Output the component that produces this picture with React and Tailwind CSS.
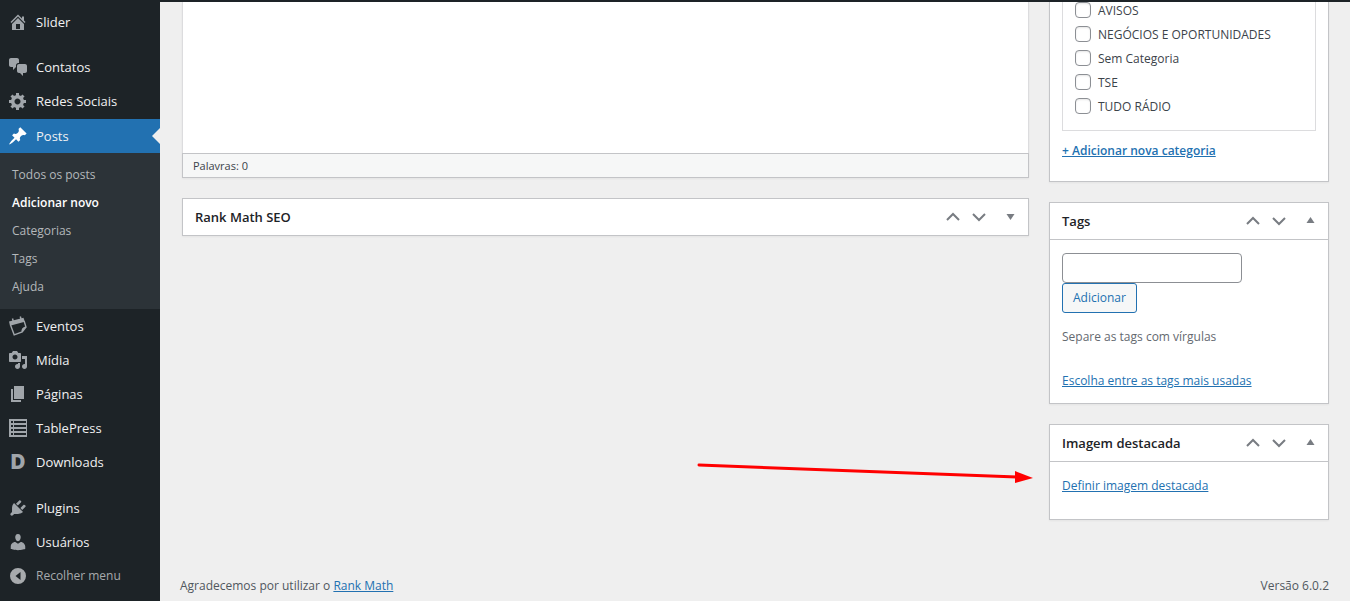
import React, { useState } from 'react';

const ICONS = {
  home: 'M16 8.5l1.53 1.53-1.06 1.06L10 4.6l-6.47 6.49-1.06-1.06L10 2.5l4 4v-2h2v4zm-6-2.46l6 5.99V18H4v-5.97zM12 17v-5H8v5h4z',
  chat: 'M11 6h-.82C9.07 6 8 7.2 8 8.16V10l-3 3v-3H3c-1.1 0-2-.9-2-2V3c0-1.1.9-2 2-2h6c1.1 0 2 .9 2 2v3zm0 1h6c1.1 0 2 .9 2 2v5c0 1.1-.9 2-2 2h-2v3l-3-3h-1c-1.1 0-2-.9-2-2V9c0-1.1.9-2 2-2z',
  gear: 'M18 12h-2.18c-.17.7-.44 1.35-.81 1.93l1.54 1.54-2.1 2.1-1.54-1.54c-.58.36-1.23.63-1.91.79V19H8v-2.18c-.68-.16-1.33-.43-1.91-.79l-1.54 1.54-2.12-2.12 1.54-1.54c-.36-.58-.63-1.23-.79-1.91H1V9.03h2.17c.16-.7.44-1.35.8-1.94L2.43 5.55l2.1-2.1 1.54 1.54c.58-.37 1.24-.64 1.93-.81V2h3v2.18c.68.16 1.33.43 1.91.79l1.54-1.54 2.12 2.12-1.54 1.54c.36.59.64 1.24.8 1.94H18V12zm-8.5 1.5c1.66 0 3-1.34 3-3s-1.34-3-3-3-3 1.34-3 3 1.34 3 3 3z',
  pin: 'M10.44 3.02l1.82-1.82 6.36 6.35-1.83 1.82c-1.05-.68-2.48-.57-3.41.36l-.75.75c-.92.93-1.04 2.35-.35 3.41l-1.83 1.82-2.41-2.41-2.8 2.79c-.42.42-3.38 2.71-3.8 2.29s1.86-3.39 2.28-3.81l2.79-2.79L4.1 9.36l1.83-1.82c1.05.69 2.48.57 3.4-.36l.75-.75c.93-.92 1.05-2.35.36-3.41z',
  media: 'M13 11V4c0-.55-.45-1-1-1h-1.67L9 1H5L3.67 3H2c-.55 0-1 .45-1 1v7c0 .55.45 1 1 1h10c.55 0 1-.45 1-1zM7 4.5c1.38 0 2.5 1.12 2.5 2.5S8.38 9.5 7 9.5 4.5 8.38 4.5 7 5.62 4.5 7 4.5zM14 6h5v10.5c0 1.38-1.12 2.5-2.5 2.5S14 17.88 14 16.5s1.12-2.5 2.5-2.5c.17 0 .34.02.5.05V9h-3V6zm-4 8.05V13h2v3.5c0 1.38-1.12 2.5-2.5 2.5S7 17.88 7 16.5 8.12 14 9.5 14c.17 0 .34.02.5.05z',
  pages: 'M6 15V2h10v13H6zm-1 1h8v2H3V5h2v11z',
  table: 'M1 1h18v18H1zM3 3v2h2V3zM6 3v2h12V3zM3 7v2h2V7zM6 7v2h12V7zM3 11v2h2v-2zM6 11v2h12v-2zM3 15v2h2v-2zM6 15v2h12v-2z',
  plug: 'M13.11 4.36L9.87 7.6 8 5.73l3.24-3.24c.35-.34 1.05-.2 1.56.32.52.51.66 1.21.31 1.55zm-8 1.77l.91-1.12 9.01 9.01-1.19.84c-.71.71-2.63 1.16-3.82 1.16H6.14L4.9 17.26c-.59.59-1.54.59-2.12 0-.59-.58-.59-1.53 0-2.12l1.24-1.24v-3.88c0-1.13.4-3.19 1.09-3.89zm7.26 3.97l3.24-3.24c.34-.35 1.04-.21 1.55.31.52.51.66 1.21.31 1.55l-3.24 3.25z',
  user: 'M10 9.25c-2.27 0-2.73-3.44-2.73-3.44C7 4.02 7.82 2 9.97 2c2.16 0 2.98 2.02 2.71 3.81 0 0-.41 3.44-2.68 3.44zm0 2.57L12.72 10c2.39 0 4.52 2.33 4.52 4.53v2.49s-3.65 1.13-7.24 1.13c-3.65 0-7.24-1.13-7.24-1.13v-2.49c0-2.25 1.94-4.48 4.47-4.48z',
  collapse: 'M10 2a8 8 0 1 0 0 16 8 8 0 0 0 0-16zM12.500 6v8l-5-4z',
};

const SUBMENU = ['Todos os posts', 'Adicionar novo', 'Categorias', 'Tags', 'Ajuda'];
const CATEGORIES = ['AVISOS', 'NEGÓCIOS E OPORTUNIDADES', 'Sem Categoria', 'TSE', 'TUDO RÁDIO'];

function Icon({ name }) {
  if (name === 'letter') {
    return <span className="w-5 text-center font-['Inter',sans-serif] text-xl leading-5 font-black">D</span>;
  }
  if (name === 'calendar') {
    return (
      <svg viewBox="0 0 20 20" className="size-5 shrink-0" fill="none" stroke="currentColor" aria-hidden="true">
        <path d="M1 5.500L15.500 1.800l1.300 4L2 9.800z" fill="currentColor" stroke="none" />
        <path d="M4.500 2.500l.8 3M12.300.5l.8 3" strokeWidth="1.500" />
        <path d="M2.500 9l3.700 9.800 8-2.800 3.800-5-1.900-6M14.200 16c-.5-2.600.8-4 3.800-5" strokeWidth="1.400" />
      </svg>
    );
  }
  return (
    <svg viewBox="0 0 20 20" className="size-5 shrink-0" fill="currentColor" fillRule="evenodd" aria-hidden="true">
      <path d={ICONS[name]} />
    </svg>
  );
}

function MenuItem({ icon, label, current }) {
  return (
    <li className={current ? 'relative bg-[#2271b1]' : ''}>
      <a href="#" className="flex h-[34px] items-center gap-2 px-2 text-[13px] leading-5 text-[#f0f0f1]">
        <span className={current ? 'flex text-white' : 'flex text-[#a0a5aa]'}>
          <Icon name={icon} />
        </span>
        {label}
      </a>
      {current && (
        <span className="absolute top-1/2 right-0 -translate-y-1/2 border-8 border-l-0 border-transparent border-r-[#efefef]" />
      )}
    </li>
  );
}

function Sidebar() {
  return (
    <nav className="w-40 shrink-0 bg-[#1d2327] pt-[3px]">
      <ul>
        <MenuItem icon="home" label="Slider" />
        <li className="h-[11px]" />
        <MenuItem icon="chat" label="Contatos" />
        <MenuItem icon="gear" label="Redes Sociais" />
        <li className="h-px" />
        <MenuItem icon="pin" label="Posts" current />
        <li className="bg-[#2c3338] py-2">
          <ul>
            {SUBMENU.map((label) => (
              <li key={label}>
                <a
                  href="#"
                  className={`block px-3 text-xs leading-7 ${
                    label === 'Adicionar novo' ? 'font-semibold text-white' : 'text-[#b4b8bb]'
                  }`}
                >
                  {label}
                </a>
              </li>
            ))}
          </ul>
        </li>
        <MenuItem icon="calendar" label="Eventos" />
        <MenuItem icon="media" label="Mídia" />
        <MenuItem icon="pages" label="Páginas" />
        <MenuItem icon="table" label="TablePress" />
        <MenuItem icon="letter" label="Downloads" />
        <li className="h-3" />
        <MenuItem icon="plug" label="Plugins" />
        <MenuItem icon="user" label="Usuários" />
        <li>
          <button type="button" className="flex h-[34px] items-center gap-2 px-2 text-xs leading-5 text-[#a7aaad]">
            <Icon name="collapse" />
            Recolher menu
          </button>
        </li>
      </ul>
    </nav>
  );
}

function PanelHeader({ title, open, onToggle }) {
  return (
    <div className="flex h-9 items-center justify-between px-3">
      <h2 className="text-[13px] leading-5 font-semibold text-[#1d2327]">{title}</h2>
      <div className="flex items-center text-[#787c82]">
        <button type="button" aria-label="Mover para cima" className="mr-3">
          <svg viewBox="0 0 14 10" className="h-[10px] w-[14px]" fill="none" stroke="currentColor" strokeWidth="2">
            <path d="M1 8l6-6 6 6" />
          </svg>
        </button>
        <button type="button" aria-label="Mover para baixo" className="mr-5">
          <svg viewBox="0 0 14 10" className="h-[10px] w-[14px]" fill="none" stroke="currentColor" strokeWidth="2">
            <path d="M1 2l6 6 6-6" />
          </svg>
        </button>
        <button type="button" aria-label="Alternar painel" aria-expanded={open} onClick={onToggle}>
          <svg viewBox="0 0 10 10" className="size-[10px]" fill="currentColor">
            <path d={open ? 'M4.500 1l4 6h-8z' : 'M.5 2h8l-4 6z'} />
          </svg>
        </button>
      </div>
    </div>
  );
}

function Panel({ title, defaultOpen = true, children }) {
  const [open, setOpen] = useState(defaultOpen);

  return (
    <section className="border border-[#c3c4c7] bg-white shadow-xs">
      <PanelHeader title={title} open={open} onToggle={() => setOpen(!open)} />
      {open && children && <div className="border-t border-[#c3c4c7] px-3">{children}</div>}
    </section>
  );
}

function Editor() {
  return (
    <div className="border border-t-0 border-[#dcdcde] bg-white shadow-xs">
      <textarea aria-label="Conteúdo" className="block h-[151px] w-full resize-none outline-none" />
      <div className="-mx-px -mb-px h-[25px] border border-[#c3c4c7] bg-[#f6f7f7] px-[10px] text-[11px] leading-6">
        Palavras: 0
      </div>
    </div>
  );
}

function CategoryPanel() {
  return (
    <section className="border border-t-0 border-[#c3c4c7] bg-white px-3 shadow-xs">
      <ul className="border border-t-0 border-[#dcdcde] px-3 pb-2">
        {CATEGORIES.map((name) => (
          <li key={name} className="h-6">
            <label className="flex items-start gap-[7px] text-xs leading-[18px]">
              <input
                type="checkbox"
                className="size-4 shrink-0 appearance-none rounded border border-[#8c8f94] bg-white shadow-[inset_0_1px_2px_rgba(0,0,0,0.1)]"
              />
              {name}
            </label>
          </li>
        ))}
      </ul>
      <a href="#" className="mt-[10px] mb-5 inline-block text-xs leading-5 font-semibold text-[#2271b1] underline">
        + Adicionar nova categoria
      </a>
    </section>
  );
}

export default function App() {
  return (
    <div className="relative flex min-h-screen flex-col bg-[#efefef] font-['Open_Sans','Segoe_UI',sans-serif] text-[#3c434a]">
      <div className="h-[2px] bg-[#1d2327]" />
      <div className="flex flex-1">
        <Sidebar />
        <div className="flex min-w-0 flex-1 flex-col pr-[21px] pl-5">
          <main className="flex gap-5 pl-[2px]">
            <div className="flex min-w-0 flex-1 flex-col gap-5">
              <Editor />
              <Panel title="Rank Math SEO" defaultOpen={false} />
            </div>
            <aside className="flex w-[280px] shrink-0 flex-col gap-5">
              <CategoryPanel />
              <Panel title="Tags">
                <form className="pt-[13px]" onSubmit={(e) => e.preventDefault()}>
                  <input
                    type="text"
                    aria-label="Adicionar nova tag"
                    className="block h-[30px] w-[180px] rounded border border-[#8c8f94] bg-white px-2 text-xs"
                  />
                  <button
                    type="submit"
                    className="block h-[30px] rounded-[3px] border border-[#2271b1] bg-[#f6f7f7] px-[10px] text-xs text-[#2271b1]"
                  >
                    Adicionar
                  </button>
                </form>
                <p className="mt-[14px] text-xs leading-5 text-[#646970]">Separe as tags com vírgulas</p>
                <a href="#" className="mt-6 mb-3 inline-block text-xs leading-5 text-[#2271b1] underline">
                  Escolha entre as tags mais usadas
                </a>
              </Panel>
              <div className="relative">
                <Panel title="Imagem destacada">
                  <a href="#" className="mt-[14px] mb-[23px] inline-block text-xs leading-5 text-[#2271b1] underline">
                    Definir imagem destacada
                  </a>
                </Panel>
                {/* Arrow pointing at the featured image link */}
                <svg
                  viewBox="0 0 336 28"
                  className="pointer-events-none absolute top-[36px] right-full mr-4 h-7 w-[336px]"
                  aria-hidden="true"
                >
                  <path d="M2 5L320 17" stroke="#f00" strokeWidth="3" strokeLinecap="round" />
                  <path d="M318 11v12l18-5z" fill="#f00" />
                </svg>
              </div>
            </aside>
          </main>
          <footer className="mt-auto flex justify-between pb-[5px] text-xs leading-5 text-[#50575e]">
            <p>
              Agradecemos por utilizar o{' '}
              <a href="#" className="text-[#2271b1] underline">
                Rank Math
              </a>
            </p>
            <p>Versão 6.0.2</p>
          </footer>
        </div>
      </div>
    </div>
  );
}
